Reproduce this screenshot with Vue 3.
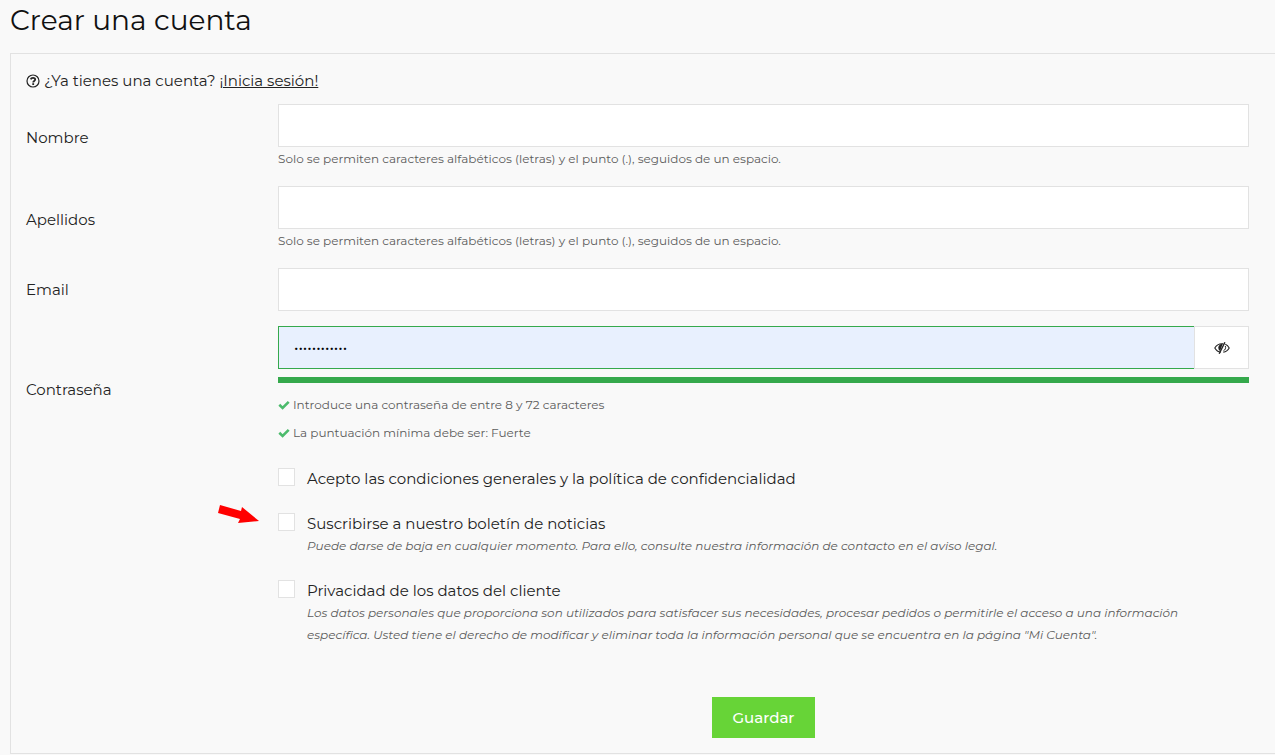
<script setup>
import { ref } from 'vue'

const textFields = ref([
  { id: 'firstname', label: 'Nombre', type: 'text', value: '', help: 'Solo se permiten caracteres alfabéticos (letras) y el punto (.), seguidos de un espacio.' },
  { id: 'lastname', label: 'Apellidos', type: 'text', value: '', help: 'Solo se permiten caracteres alfabéticos (letras) y el punto (.), seguidos de un espacio.' },
  { id: 'email', label: 'Email', type: 'email', value: '', help: '' }
])

const password = ref('abcdefghijkl')
const visible = ref(false)

const rules = [
  'Introduce una contraseña de entre 8 y 72 caracteres',
  'La puntuación mínima debe ser: Fuerte'
]

const consents = ref([
  { id: 'terms', label: 'Acepto las condiciones generales y la política de confidencialidad', checked: false, help: '' },
  { id: 'newsletter', label: 'Suscribirse a nuestro boletín de noticias', checked: false, pointed: true, help: 'Puede darse de baja en cualquier momento. Para ello, consulte nuestra información de contacto en el aviso legal.' },
  { id: 'privacy', label: 'Privacidad de los datos del cliente', checked: false, help: 'Los datos personales que proporciona son utilizados para satisfacer sus necesidades, procesar pedidos o permitirle el acceso a una información específica. Usted tiene el derecho de modificar y eliminar toda la información personal que se encuentra en la página "Mi Cuenta".' }
])
</script>

<template>
  <main class="page">
    <h1 class="title">Crear una cuenta</h1>
    <form class="panel" @submit.prevent>
      <p class="login">
        <svg class="question" viewBox="0 0 14 14" aria-hidden="true">
          <circle cx="7" cy="7" r="6" fill="none" stroke="currentColor" stroke-width="1.2" />
          <path d="M4.700 5.400C5.100 4.200 5.900 3.900 7 3.900c1.300 0 2.200.7 2.200 1.700C9.200 7 7.200 6.900 7.200 8.400" fill="none" stroke="currentColor" stroke-width="1.800" />
          <path d="M6.300 9.200h1.800v1.800H6.300z" fill="currentColor" />
        </svg>
        <span>¿Ya tienes una cuenta? <a href="#login">¡Inicia sesión!</a></span>
      </p>

      <div v-for="f in textFields" :key="f.id" class="row">
        <label class="label" :for="f.id">{{ f.label }}</label>
        <div class="control">
          <input :id="f.id" v-model="f.value" class="input" :type="f.type">
          <p v-if="f.help" class="hint">{{ f.help }}</p>
        </div>
      </div>

      <div class="row">
        <label class="label" for="password">Contraseña</label>
        <div class="control">
          <div class="group">
            <input id="password" v-model="password" class="input secret" :type="visible ? 'text' : 'password'">
            <button class="toggle" type="button" aria-label="Mostrar contraseña" @click="visible = !visible">
              <svg class="eye" viewBox="0 0 16 14" aria-hidden="true">
                <path d="M6.800 11.300C4.300 11 2.200 9.500.8 7 2.300 4.300 4.800 2.700 8 2.700h1.200M11.300 3.300C13 4 14.300 5.300 15.200 7c-1.300 2.400-3.300 3.900-5.900 4.300" fill="none" stroke="currentColor" stroke-width="1.100" />
                <path d="M8.800 2.700C6 2.800 4.300 4.500 4.300 6.500c0 1.700.7 2.800 1.800 3.600z" fill="currentColor" />
                <path d="M10.900 1.200 5.200 12.800" fill="none" stroke="currentColor" stroke-width="1.400" />
                <path d="M11.300 5c.8 2-.1 4-1.900 4.900" fill="none" stroke="currentColor" stroke-width="1" />
              </svg>
            </button>
          </div>
          <div class="strength"></div>
          <ul class="rules">
            <li v-for="r in rules" :key="r">
              <svg class="check" viewBox="0 0 12 10" aria-hidden="true">
                <path d="M1.300 4.800 4.600 8 10.700 1.900" fill="none" stroke="currentColor" stroke-width="2.600" />
              </svg>
              <span>{{ r }}</span>
            </li>
          </ul>
        </div>
      </div>

      <div class="consents">
        <div v-for="c in consents" :key="c.id" class="consent">
          <svg v-if="c.pointed" class="arrow" viewBox="0 0 42 20" aria-hidden="true">
            <path d="M2 1 23 7 24 3 41 17 20 19 22 15 0 9z" fill="#f00" />
          </svg>
          <input :id="c.id" v-model="c.checked" class="box" type="checkbox">
          <div>
            <label class="text" :for="c.id">{{ c.label }}</label>
            <p v-if="c.help" class="note">{{ c.help }}</p>
          </div>
        </div>
      </div>

      <div class="actions">
        <button class="save" type="submit">Guardar</button>
      </div>
    </form>
  </main>
</template>

<style>
body {
  background: #f9f9f9;
}
</style>

<style scoped>
.page {
  padding-left: 10px;
  font-family: Montserrat, Inter, "Liberation Sans", sans-serif;
  font-size: 15px;
  line-height: 22px;
  color: #232323;
}
.page * {
  box-sizing: border-box;
}
.title {
  margin: 0;
  padding: 4px 0 17px;
  font-size: 28px;
  line-height: 32px;
  font-weight: 400;
  color: #111;
}
.panel {
  padding: 16px 26px 15px 15px;
  border: 1px solid #e2e2e2;
  border-right: 0;
}
p {
  margin: 0;
}
.login {
  display: flex;
  align-items: center;
  gap: 4px;
  margin-bottom: 12px;
}
.login a {
  color: inherit;
}
.question {
  width: 14px;
  height: 14px;
}
.row {
  display: flex;
  align-items: center;
  margin-bottom: 15px;
}
.label {
  flex: 0 0 252px;
}
.control {
  flex: 1;
  min-width: 0;
}
.input {
  display: block;
  width: 100%;
  height: 43px;
  padding: 0 15px;
  border: 1px solid #e2e2e2;
  border-radius: 0;
  background: #fff;
  font: inherit;
  color: inherit;
  outline: 0;
}
.hint {
  font-size: 12px;
  line-height: 24px;
  color: #5c5c5c;
}
.group {
  display: flex;
}
.secret {
  flex: 1;
  border-color: #35a94c;
  border-right: 0;
  background: #e8f0fe;
  color: #000;
}
.toggle {
  display: flex;
  align-items: center;
  justify-content: center;
  flex: 0 0 55px;
  padding: 0;
  border: 1px solid #e2e2e2;
  background: #fff;
  color: #232323;
}
.eye {
  width: 16px;
  height: 14px;
}
.strength {
  height: 6px;
  margin-top: 8px;
  background: #35a94c;
}
.rules {
  margin: 0;
  padding: 8px 0 6px;
  list-style: none;
  font-size: 12px;
  line-height: 28px;
  color: #5c5c5c;
}
.rules li {
  display: flex;
  align-items: center;
  gap: 3px;
}
.check {
  width: 12px;
  height: 10px;
  color: #4cbb6c;
}
.consents {
  display: flex;
  flex-direction: column;
  gap: 23px;
  margin: 0 48px 51px 252px;
}
.consent {
  position: relative;
  display: flex;
  align-items: flex-start;
  gap: 12px;
}
.box {
  flex: none;
  appearance: none;
  width: 17px;
  height: 18px;
  margin: 0;
  border: 1px solid #e2e2e2;
  background: #fff;
}
.box:checked {
  background: #67d437;
}
.text {
  display: block;
}
.note {
  font-size: 12px;
  font-style: italic;
  color: #5c5c5c;
}
.arrow {
  position: absolute;
  top: -9px;
  left: -60px;
  width: 42px;
  height: 20px;
}
.actions {
  display: flex;
  justify-content: center;
  margin-left: 252px;
}
.save {
  height: 41px;
  padding: 0 20px;
  border: 0;
  background: #67d437;
  color: #fff;
  font: inherit;
  font-weight: 500;
}
</style>
